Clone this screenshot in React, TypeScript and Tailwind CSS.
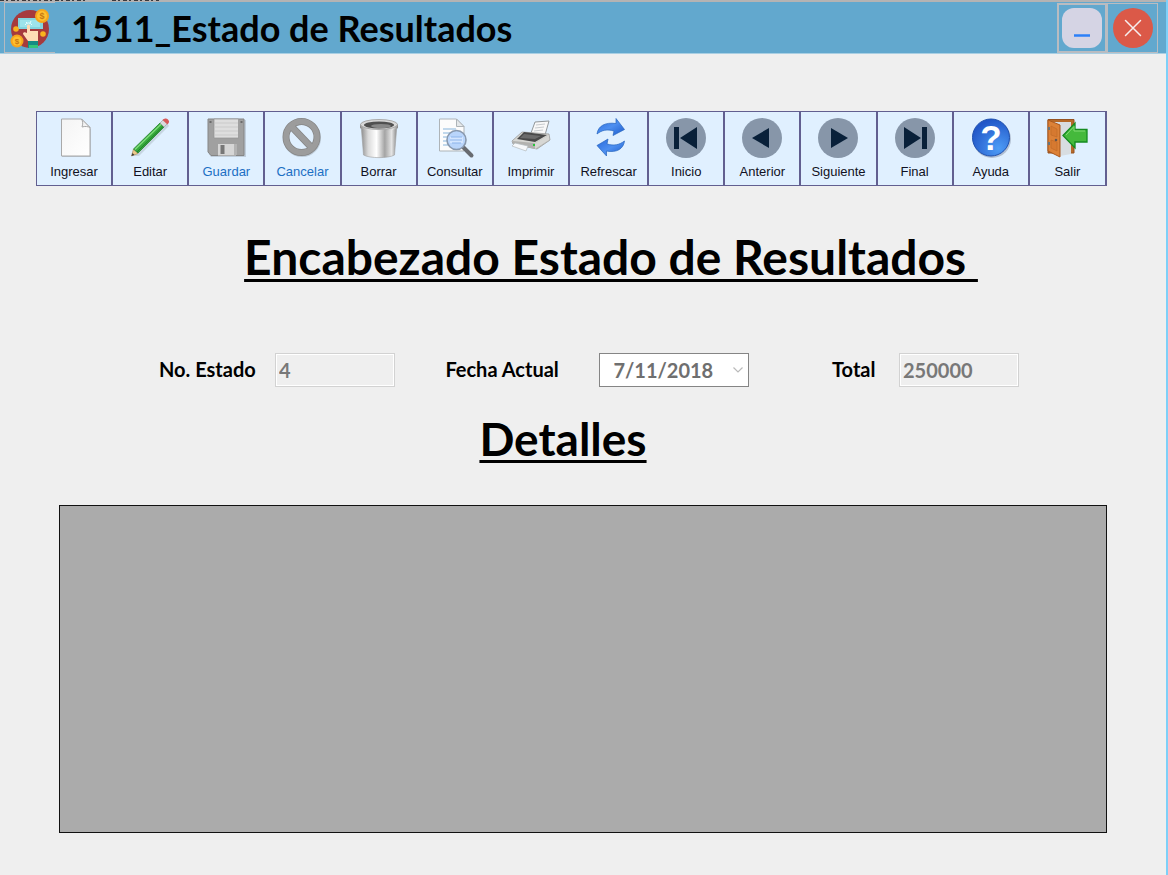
import React from 'react';

type Tool = { label: string; icon: React.ReactNode; disabled?: boolean };

const Svg = ({ children }: { children: React.ReactNode }) => (
  <svg viewBox="0 0 40 40" className="size-10 overflow-visible" aria-hidden="true">
    {children}
  </svg>
);

const PageIcon = () => (
  <Svg>
    <defs>
      <linearGradient id="page" x1="0" y1="0" x2="1" y2="1">
        <stop offset="0" stopColor="#f4f4f4" />
        <stop offset="1" stopColor="#ffffff" />
      </linearGradient>
    </defs>
    <path d="M8 2h20l9 9v28H8z" fill="#8d959c" opacity=".45" />
    <path d="M7.500 1h20l8.500 8.500V38H7.500z" fill="url(#page)" stroke="#a9a9a9" />
    <path d="M27.500 1c1.500 2.500 1.500 5 .5 8 3-1 6-.5 8 .5z" fill="#f3f3f3" stroke="#a9a9a9" />
  </Svg>
);

const PencilIcon = () => (
  <Svg>
    <path d="M4 38 37 5l2 3L9 38z" fill="#8b98a0" opacity=".3" />
    <path d="M1.500 38l2-7 4.500 4.500z" fill="#edc98b" stroke="#a58149" strokeWidth=".6" />
    <path d="M1.500 38l1-3 2 2z" fill="#383838" />
    <path d="M3.500 31 30 5l4 4L8 35z" fill="#35a83b" stroke="#25812d" strokeWidth=".8" />
    <path d="M5 31.500 31 6.200" stroke="#82dd7d" strokeWidth="1.300" />
    <path d="M7 34 33 8.500" stroke="#1d8229" strokeWidth="1" />
    <path d="M30 5 33.500 1.500l4 4L34 9z" fill="#d8dadd" stroke="#999" strokeWidth=".6" />
    <path d="M32.500 2c2-2 4-2 5.500-.5s1.500 3-.5 5z" fill="#d8595a" />
  </Svg>
);

const DiskIcon = () => (
  <Svg>
    <path d="M3 2h37v37H5l-2-3z" fill="#76828b" opacity=".3" />
    <path d="M2 1h36v36.500H5L2 34z" fill="#a0a0a0" stroke="#858585" />
    <path d="M8 1h24.500v19H8z" fill="#dedede" stroke="#929292" strokeWidth=".7" />
    <path d="M9 5h23M9 9h23M9 13h23M9 17h23" stroke="#cacaca" />
    <path d="M3.500 3h2v2h-2zM34.500 3h2v2h-2z" fill="#6b6b6b" />
    <path d="M12 26h18v11.500H12z" fill="#d6d6d6" />
    <path d="M14.500 27h4v9h-4z" fill="#777" />
    <path d="M28 26h3v11h-3z" fill="#b3b3b3" />
  </Svg>
);

const ForbidIcon = () => (
  <Svg>
    <circle cx="20" cy="20" r="16" fill="none" stroke="#808c95" strokeWidth="6" opacity=".35" />
    <circle cx="19.500" cy="19" r="15.500" fill="none" stroke="#858585" strokeWidth="7" />
    <path d="M9 8l21 22" stroke="#858585" strokeWidth="7" />
    <circle cx="19.500" cy="19" r="15.500" fill="none" stroke="#9c9c9c" strokeWidth="5.500" />
    <path d="M9 8l21 22" stroke="#9c9c9c" strokeWidth="5.500" />
  </Svg>
);

const BinIcon = () => (
  <Svg>
    <defs>
      <linearGradient id="bin">
        <stop offset="0" stopColor="#8b8b8b" />
        <stop offset=".2" stopColor="#dadada" />
        <stop offset=".43" stopColor="#fff" />
        <stop offset=".66" stopColor="#a4a4a4" />
        <stop offset=".85" stopColor="#e5e5e5" />
        <stop offset="1" stopColor="#858585" />
      </linearGradient>
    </defs>
    <path d="M2 6l2.500 31c6 3.500 25 3.500 31 0L38 6z" fill="url(#bin)" stroke="#a0a0a0" strokeWidth=".6" />
    <path d="M1 6v4c5 4 33 4 38 0V6z" fill="url(#bin)" />
    <ellipse cx="20" cy="6.500" rx="18.500" ry="5" fill="#d9d9d9" stroke="#aaa" />
    <ellipse cx="20" cy="7" rx="15" ry="3.500" fill="#505050" />
    <ellipse cx="22" cy="8" rx="10" ry="2" fill="#888" />
  </Svg>
);

const SearchPageIcon = () => (
  <Svg>
    <path d="M4.500 1h17L29 8.500V33H4.500z" fill="#fcfcfc" stroke="#aeb4b8" />
    <path d="M21.500 1v7.500H29z" fill="#e4e8ea" stroke="#aeb4b8" />
    <path d="M8 11h13M8 15h9M8 19h5M8 23h4M8 27h6" stroke="#85b3dc" strokeWidth="1.200" />
    <path d="M28 29l8.500 8.500" stroke="#686b70" strokeWidth="4" strokeLinecap="round" />
    <circle cx="21.500" cy="22" r="9.500" fill="#b9d5fb" stroke="#8999ae" strokeWidth="1.600" />
    <path d="M15 19h13v6H15z" fill="#d4e6ff" />
    <path d="M16 19h11M15 22h12M17 25h9" stroke="#8db4ea" />
  </Svg>
);

const PrinterIcon = () => (
  <Svg>
    <path d="M20 15 24 4l14-1-4 14z" fill="#f8f8f8" stroke="#92979a" />
    <path d="M25 7l9-1M24 10l9-1M23 13l9-1" stroke="#c7cbce" />
    <path d="M1 23 11 14l27 2 1 6-13 9-24-5z" fill="#d6d6d2" stroke="#9b9b99" strokeWidth=".8" />
    <path d="M6 21l7-7 23 3-12 7z" fill="#494949" />
    <path d="M13 16l17 2-6 3-15-1z" fill="#6b6b6b" />
    <path d="M2 23l22 2 14-8v6L25 31 2 27z" fill="#b2b2af" />
    <path d="M24 25v6l14-9v-5z" fill="#d7d7d4" />
    <path d="M4 25l13 3-2 5-14-5z" fill="#f6f8fa" stroke="#b3babd" strokeWidth=".7" />
    <path d="M22 26h2v2h-2z" fill="#28c53b" />
  </Svg>
);

const RefreshIcon = () => (
  <Svg>
    <defs>
      <linearGradient id="refresh" x1="0" y1="0" x2="1" y2="1">
        <stop offset="0" stopColor="#2869dc" />
        <stop offset=".5" stopColor="#4d8ff0" />
        <stop offset="1" stopColor="#1b5acb" />
      </linearGradient>
    </defs>
    <g fill="url(#refresh)" stroke="#2564bd" strokeWidth=".7" strokeLinejoin="round">
      <path d="M8 16C9 8 16 4 27 5.500V.5l8.500 11L24 17.500l1-4.500c-7-2-12-1-17 3z" />
      <path d="M35.500 23c-1 8-8 12-18 10v5L8 27.500 19 21l-1 5c7 2 12 1 17.500-3z" />
    </g>
  </Svg>
);

const NavIcon = ({ shape }: { shape: string }) => (
  <Svg>
    <circle cx="20" cy="20" r="20" fill="#8796a9" />
    <path d={shape} fill="#092039" />
  </Svg>
);

const HelpIcon = () => (
  <Svg>
    <defs>
      <radialGradient id="help" cx=".7" cy=".8" r=".8">
        <stop offset="0" stopColor="#4d9cf6" />
        <stop offset="1" stopColor="#2257c8" />
      </radialGradient>
    </defs>
    <circle cx="21" cy="21" r="19" fill="#8490a5" opacity=".5" />
    <circle cx="20" cy="19.500" r="18.500" fill="url(#help)" stroke="#1d4fae" />
    <text x="20" y="32" textAnchor="middle" fontSize="35" fontWeight="700" fontFamily="Liberation Sans" fill="#fff">?</text>
  </Svg>
);

const ExitIcon = () => (
  <Svg>
    <path d="M1 1.500h26V35H1z" fill="#b66929" stroke="#955221" />
    <path d="M4 4h20v32l-11 2z" fill="#d8dde1" />
    <path d="M1 2 13 7v32L1 33z" fill="#dc8137" stroke="#a9571d" />
    <path d="M4 8l6 3v8l-6-2zM4 22l6 2v9l-6-3z" fill="#d67930" stroke="#bd6826" strokeWidth=".6" />
    <path d="M2 9v3M2 24v3" stroke="#68737a" strokeWidth="2" />
    <circle cx="9" cy="22" r="1.300" fill="#68554a" />
    <path d="M16 17.500 28 5v6.500h12v12.500H28v6z" fill="#45b93c" stroke="#148b20" strokeWidth="1.300" />
    <path d="M19 17l8-8.500V13h11" fill="none" stroke="#83dc74" />
  </Svg>
);

const BrandIcon = () => (
  <svg viewBox="0 0 40 40" className="size-10" aria-hidden="true">
    <circle cx="20" cy="21" r="19" fill="#a63a3d" />
    <path d="M8 10h25v11H8z" fill="#83d5df" />
    <path d="M10 12h20v7H10z" fill="#9de4eb" />
    <path d="M15 17a4 4 0 0 1 7 0M16 14l1 1M21 13l-1 2" fill="none" stroke="#e7ffff" />
    <path d="M17 18c0-2 3-2 3 0v5h8v10H18l-5-7c0-2 2-2 4-1z" fill="#ffdcb5" />
    <path d="M18 33h10v7H18z" fill="#168c84" />
    <path d="M19 37h9v3h-9z" fill="#35c57a" />
    <circle cx="6" cy="21" r="2.800" fill="#f9b21d" />
    <circle cx="33" cy="26" r="2.800" fill="#f9b21d" />
    <circle cx="32" cy="8" r="7" fill="#f6a51c" />
    <circle cx="32" cy="8" r="5" fill="#ffc02f" />
    <circle cx="7" cy="33" r="6.500" fill="#f6a51c" />
    <circle cx="7" cy="33" r="4.500" fill="#ffc02f" />
    <text x="32" y="11" textAnchor="middle" fontSize="9" fontWeight="700" fontFamily="Liberation Sans" fill="#c87812">$</text>
    <text x="7" y="36" textAnchor="middle" fontSize="8" fontWeight="700" fontFamily="Liberation Sans" fill="#c87812">$</text>
  </svg>
);

const tools: Tool[] = [
  { label: 'Ingresar', icon: <PageIcon /> },
  { label: 'Editar', icon: <PencilIcon /> },
  { label: 'Guardar', icon: <DiskIcon />, disabled: true },
  { label: 'Cancelar', icon: <ForbidIcon />, disabled: true },
  { label: 'Borrar', icon: <BinIcon /> },
  { label: 'Consultar', icon: <SearchPageIcon /> },
  { label: 'Imprimir', icon: <PrinterIcon /> },
  { label: 'Refrescar', icon: <RefreshIcon /> },
  { label: 'Inicio', icon: <NavIcon shape="M8 9h5v22H8zM31 9v22L14 20z" /> },
  { label: 'Anterior', icon: <NavIcon shape="M27 10v20L10 20z" /> },
  { label: 'Siguiente', icon: <NavIcon shape="M13 10v20l17-10z" /> },
  { label: 'Final', icon: <NavIcon shape="M9 9v22l17-11zM27 9h5v22h-5z" /> },
  { label: 'Ayuda', icon: <HelpIcon /> },
  { label: 'Salir', icon: <ExitIcon /> },
];

const fieldClass =
  'h-[34px] min-w-0 border border-[#d2d2d2] bg-[#efefef] px-[3px] text-xl font-bold text-[#787878] outline-1 -outline-offset-2 outline-white';

export default function App() {
  return (
    <div className="flex min-h-screen flex-col border-r-2 border-[#7ed0f8] bg-[#efefef] font-['Century_Gothic','Lato',sans-serif] text-black">
      <div className="flex h-0.5 bg-[#b5b3b3]">
        <svg viewBox="0 0 160 2" className="h-0.5 w-40" aria-hidden="true">
          <path d="M0 .5h85M112 .5h47" stroke="#3c3a3d" strokeDasharray="4 2 2 3" />
        </svg>
      </div>
      <header className="flex h-[52px] items-center border-b border-[#a9cfe3] bg-[#62a8ce] pr-2 pl-1">
        <div className="flex h-[51px] w-[51px] shrink-0 items-center justify-center border border-r-0 border-[#b5bac0]">
          <BrandIcon />
        </div>
        <h1 className="ml-4 flex-1 text-4xl leading-10 font-bold">1511_Estado de Resultados</h1>
        <button aria-label="Minimizar" className="flex size-[50px] items-center justify-center border-2 border-[#b9bcc1]">
          <svg viewBox="0 0 40 40" className="size-10" aria-hidden="true">
            <rect width="40" height="40" rx="12" fill="#d5d4e4" />
            <path d="M12 27.500h16" stroke="#2c80f8" strokeWidth="2.500" />
          </svg>
        </button>
        <button aria-label="Cerrar" className="flex h-[50px] w-[51px] items-center justify-center border border-[#b9bcc1]">
          <svg viewBox="0 0 40 40" className="size-10" aria-hidden="true">
            <circle cx="20" cy="20" r="20" fill="#db5948" />
            <path d="M12.500 12.500l15 15m0-15l-15 15" stroke="#f6eeee" strokeWidth="1.500" strokeLinecap="round" />
          </svg>
        </button>
      </header>

      <nav className="mt-[57px] mr-[59px] ml-9 grid grid-cols-[repeat(7,76fr)_79fr_repeat(6,76fr)] border border-[#625f90]">
        {tools.map((tool) => (
          <button
            key={tool.label}
            disabled={tool.disabled}
            className="flex h-[73px] flex-col items-center border-r-2 border-[#625f90] bg-[#e0f0ff] pt-1.5 font-['Liberation_Sans',sans-serif] text-[13px] leading-5 text-[#111122] last:border-r disabled:text-[#1c6fc4]"
          >
            {tool.icon}
            <span className="mt-1">{tool.label}</span>
          </button>
        ))}
      </nav>

      <main className="flex flex-1 flex-col">
        <h2 className="mt-[43px] ml-14 text-center text-5xl leading-[56px] font-bold whitespace-pre underline decoration-[3px] underline-offset-4 [text-decoration-skip-ink:none]">
          {'Encabezado Estado de Resultados '}
        </h2>

        <form className="mt-[68px] flex pr-[147px] pl-[159px]">
          <div className="flex">
            <label htmlFor="estado" className="w-[116px] text-xl leading-8 font-bold">No. Estado</label>
            <input id="estado" disabled defaultValue="4" className={`${fieldClass} w-[120px]`} />
          </div>
          <div className="grow-[50]" />
          <div className="flex">
            <label htmlFor="fecha" className="w-[154px] text-xl leading-8 font-bold">Fecha Actual</label>
            <div className="flex h-[34px] w-[150px] items-center border border-[#858585] bg-white">
              <input id="fecha" disabled defaultValue="7/11/2018" className="min-w-0 flex-1 pl-[13px] text-xl font-bold text-[#6f6f6f]" />
              <button type="button" disabled aria-label="Abrir calendario" className="flex w-5 justify-center">
                <svg viewBox="0 0 10 6" className="h-1.5 w-2.5" aria-hidden="true">
                  <path d="M.5.5 5 5 9.500.5" fill="none" stroke="#bababa" strokeWidth="1.200" />
                </svg>
              </button>
            </div>
          </div>
          <div className="grow-[82]" />
          <div className="flex">
            <label htmlFor="total" className="w-[67px] text-xl leading-8 font-bold">Total</label>
            <input id="total" disabled defaultValue="250000" className={`${fieldClass} w-[120px]`} />
          </div>
        </form>

        <h2 className="mt-6 mr-10 text-center text-[46px] leading-[56px] font-bold underline decoration-[3px] underline-offset-4 [text-decoration-skip-ink:none]">
          Detalles
        </h2>

        <section aria-label="Detalles" className="mt-[38px] mr-[59px] mb-[42px] ml-[59px] flex-1 border border-[#111] bg-[#ababab]" />
      </main>
    </div>
  );
}
